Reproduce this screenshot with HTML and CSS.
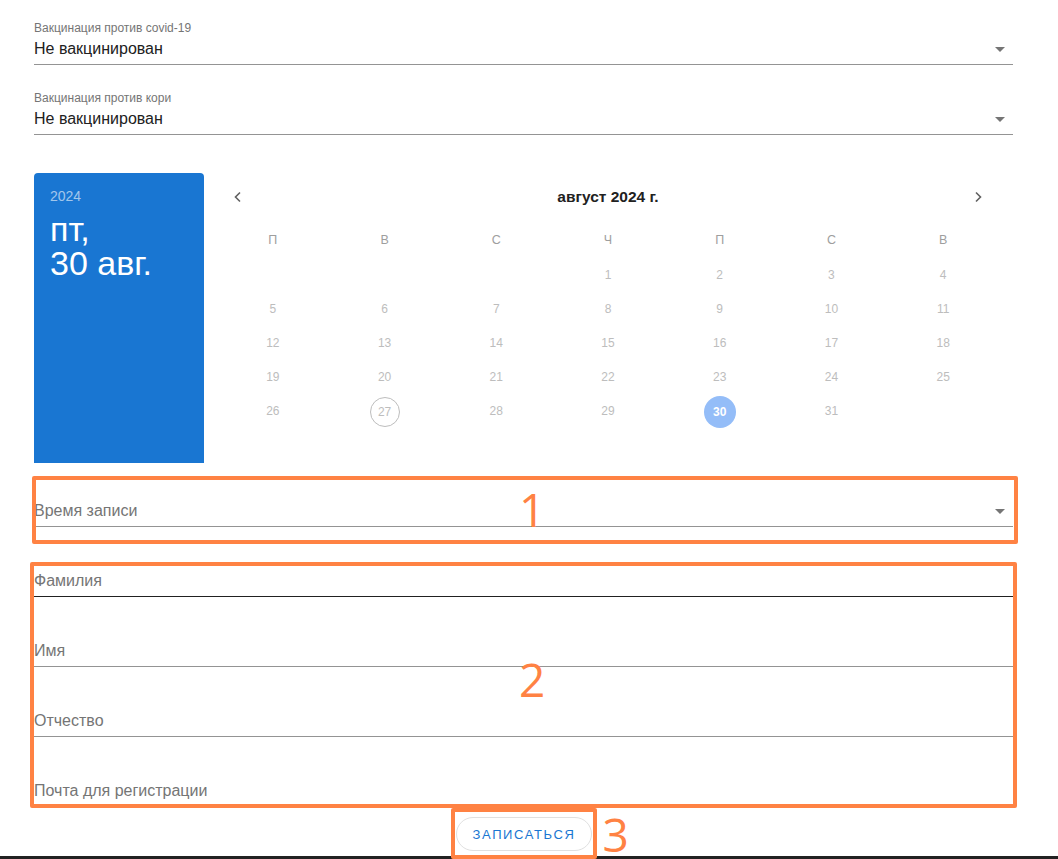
FILE: index.html
```html
<!DOCTYPE html>
<html lang="ru">
<head>
<meta charset="utf-8">
<title>Запись</title>
<link rel="stylesheet" href="styles.css">
</head>
<body>
<div class="page">
  <div class="select-field first">
    <div class="select-label">Вакцинация против covid-19</div>
    <div class="select-row"><span class="select-value">Не вакцинирован</span><span class="caret"></span></div>
  </div>
  <div class="select-field second">
    <div class="select-label">Вакцинация против кори</div>
    <div class="select-row"><span class="select-value">Не вакцинирован</span><span class="caret"></span></div>
  </div>

  <div class="picker">
    <div class="picker-toolbar">
      <div class="picker-year">2024</div>
      <div class="picker-date"><div>пт,</div><div>30 авг.</div></div>
    </div>
    <div class="calendar">
      <div class="cal-header">
        <svg class="nav" width="14" height="14" viewBox="0 0 14 14"><path d="M9 2.5 L4.5 7 L9 11.5" fill="none" stroke="#616161" stroke-width="1.6"/></svg>
        <div class="cal-title">август 2024 г.</div>
        <svg class="nav" width="14" height="14" viewBox="0 0 14 14"><path d="M5 2.5 L9.5 7 L5 11.5" fill="none" stroke="#616161" stroke-width="1.6"/></svg>
      </div>
      <div class="cal-grid weekdays">
        <span>П</span><span>В</span><span>С</span><span>Ч</span><span>П</span><span>С</span><span>В</span>
      </div>
      <div class="cal-grid days">
        <span></span><span></span><span></span><span>1</span><span>2</span><span>3</span><span>4</span>
        <span>5</span><span>6</span><span>7</span><span>8</span><span>9</span><span>10</span><span>11</span>
        <span>12</span><span>13</span><span>14</span><span>15</span><span>16</span><span>17</span><span>18</span>
        <span>19</span><span>20</span><span>21</span><span>22</span><span>23</span><span>24</span><span>25</span>
        <span>26</span><span><b class="today">27</b></span><span>28</span><span>29</span><span><b class="selected">30</b></span><span>31</span><span></span>
      </div>
    </div>
  </div>

  <div class="note note-1">
    <div class="select-row plain"><span class="placeholder">Время записи</span><span class="caret"></span></div>
    <span class="note-num num-1">1</span>
  </div>

  <div class="note note-2">
    <div class="text-field dark"><span class="placeholder">Фамилия</span></div>
    <div class="text-field"><span class="placeholder">Имя</span></div>
    <div class="text-field"><span class="placeholder">Отчество</span></div>
    <div class="text-field"><span class="placeholder">Почта для регистрации</span></div>
    <span class="note-num num-2">2</span>
  </div>

  <div class="actions">
    <div class="note note-3">
      <button class="submit" type="button">Записаться</button>
      <span class="note-num num-3">3</span>
    </div>
  </div>
</div>
<div class="footer-bar"></div>
</body>
</html>
```

FILE: styles.css
```css
html, body {
  margin: 0;
  padding: 0;
  background: #ffffff;
  font-family: "Liberation Sans", Arial, sans-serif;
  color: #212121;
}

.page {
  width: 979px;
  margin-left: 34px;
}

/* select fields */
.select-field.first { padding-top: 20px; }
.select-field.second { padding-top: 25px; }

.select-label {
  font-size: 12px;
  line-height: 16px;
  color: #757575;
  margin-bottom: 2px;
}

.select-row {
  display: flex;
  align-items: center;
  justify-content: space-between;
  height: 20px;
  padding-top: 1px;
  padding-bottom: 5px;
  border-bottom: 1px solid #949494;
}

.select-value {
  font-size: 16px;
  line-height: 20px;
  color: #212121;
}

.caret {
  width: 0;
  height: 0;
  border-left: 5px solid transparent;
  border-right: 5px solid transparent;
  border-top: 5px solid #757575;
  margin-right: 8px;
  margin-top: 1px;
}

/* date picker */
.picker {
  display: flex;
  margin-top: 38px;
  height: 290px;
}

.picker-toolbar {
  width: 170px;
  flex: none;
  background: #1976d2;
  border-radius: 4px 4px 0 0;
  color: #ffffff;
  padding: 13px 0 0 16px;
  box-sizing: border-box;
}

.picker-year {
  font-size: 14px;
  line-height: 20px;
  color: rgba(255, 255, 255, 0.6);
  margin-bottom: 6px;
}

.picker-date {
  font-size: 34px;
  line-height: 34px;
  color: #ffffff;
}

.calendar {
  flex: 1;
  padding: 0 14px 0 13px;
}

.cal-header {
  display: flex;
  align-items: center;
  justify-content: space-between;
  height: 48px;
  padding: 0 14px;
}

.nav { display: block; }

.cal-title {
  font-size: 15.5px;
  font-weight: bold;
  color: #212121;
}

.cal-grid {
  display: grid;
  grid-template-columns: repeat(7, 1fr);
}

.cal-grid span {
  height: 34px;
  display: flex;
  align-items: center;
  justify-content: center;
  font-size: 12px;
}

.weekdays { margin-top: 2px; }
.weekdays span { color: #9e9e9e; font-size: 12.5px; }
.days { margin-top: 1px; }
.days span { color: #bdbdbd; }

.today, .selected {
  display: flex;
  align-items: center;
  justify-content: center;
  border-radius: 50%;
  font-weight: normal;
}

.today {
  width: 30px;
  height: 30px;
  box-sizing: border-box;
  border: 1px solid #bdbdbd;
  color: #bdbdbd;
  margin-top: 1px;
}

.selected {
  width: 32px;
  height: 32px;
  background: #94bdf8;
  color: #ffffff;
  font-weight: bold;
  margin-top: 1px;
}

/* annotated blocks */
.note { position: relative; }

.note::after {
  content: "";
  position: absolute;
  border: 4px solid #ff8243;
  border-radius: 2px;
  pointer-events: none;
  z-index: 2;
}

.note-num {
  position: absolute;
  font-family: "Open Sans", "DejaVu Sans", sans-serif;
  font-size: 46px;
  line-height: 40px;
  color: #ff8243;
  z-index: 2;
}

.note-1 {
  margin-top: 13px;
  padding: 24px 0 17px;
}
.note-1::after { top: 0; bottom: 0; left: -2px; right: -5px; }
.num-1 { top: 13px; left: 485px; }

.placeholder {
  font-size: 16px;
  line-height: 20px;
  color: #757575;
}

.note-2 {
  margin-top: 18px;
  padding: 8px 0 1px;
}
.note-2::after { top: 0; bottom: 0; left: -4px; right: -4px; }
.num-2 { top: 97px; left: 485px; }

.text-field {
  height: 20px;
  padding-top: 1px;
  padding-bottom: 5px;
  border-bottom: 1px solid #949494;
  margin-top: 43px;
}
.text-field:first-child { margin-top: 0; }
.text-field.dark { border-bottom-color: #212121; }

.actions {
  display: flex;
  justify-content: center;
  padding: 9px 0 5px;
}

.note-3 { display: flex; }
.note-3::after { top: -9px; bottom: -8px; left: -5px; right: -5px; }
.num-3 { top: -3px; left: 147px; }

.submit {
  width: 136px;
  height: 34px;
  border: 1px solid #e0e0e0;
  border-radius: 17px;
  background: #ffffff;
  color: #1976d2;
  font-family: "Liberation Sans", Arial, sans-serif;
  font-size: 13px;
  letter-spacing: 1.6px;
  text-transform: uppercase;
  padding: 0 0 0 1px;
}

.footer-bar {
  height: 10px;
  background: #222222;
}
```
